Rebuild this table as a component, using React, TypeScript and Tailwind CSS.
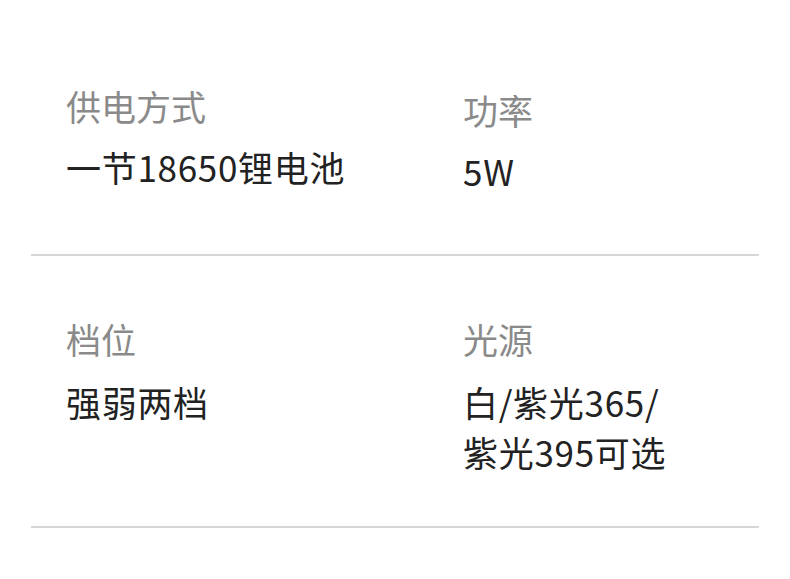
const specs = [
  {
    pad: 'pt-[81px] pb-[58px]',
    gap: 'mt-[11px]',
    left: { label: '供电方式', value: ['一节18650锂电池'] },
    right: { label: '功率', value: ['5W'] },
  },
  {
    pad: 'pt-[58px] pb-[49px]',
    gap: 'mt-[13px]',
    left: { label: '档位', value: ['强弱两档'] },
    right: { label: '光源', value: ['白/紫光365/', '紫光395可选'] },
  },
];

function Spec({ label, value, gap, shift }: { label: string; value: string[]; gap: string; shift?: boolean }) {
  return (
    <div className={shift ? 'pt-[4px]' : ''}>
      <div className="text-[35px] leading-[50px] text-[#8a8a8a]">{label}</div>
      <div className={`${gap} text-[35px] leading-[50px] tracking-[0.7px] text-[#222222]`}>
        {value.map(v => (
          <div key={v}>{v}</div>
        ))}
      </div>
    </div>
  );
}

export default function App() {
  return (
    <div
      className="h-[579px] w-[790px] overflow-hidden bg-white px-[31px]"
      style={{ fontFamily: '"Noto Sans CJK SC", "Noto Sans", sans-serif' }}
    >
      {specs.map((row, i) => (
        <div
          key={i}
          className={`grid grid-cols-[397px_1fr] border-b-2 border-[#d6d6d6] pl-[35px] ${row.pad}`}
        >
          <Spec {...row.left} gap={row.gap} />
          <Spec {...row.right} gap={row.gap} shift={i === 0} />
        </div>
      ))}
    </div>
  );
}
